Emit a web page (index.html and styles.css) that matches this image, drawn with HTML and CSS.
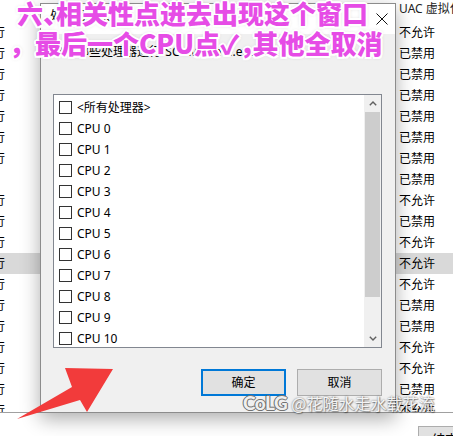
FILE: index.html
```html
<!DOCTYPE html>
<html lang="zh-CN">
<head>
<meta charset="utf-8">
<title>处理器关联</title>
<link rel="stylesheet" href="styles.css">
</head>
<body>
<div class="tm">
  <div class="list">
    <div class="hdr"><div class="r">UAC 虚拟化</div></div>
    <div class="row"><div class="l"><span>正在运行</span></div><div class="r">不允许</div></div>
    <div class="row"><div class="l"><span>正在运行</span></div><div class="r">已禁用</div></div>
    <div class="row"><div class="l"><span>正在运行</span></div><div class="r">已禁用</div></div>
    <div class="row"><div class="l"><span>正在运行</span></div><div class="r">已禁用</div></div>
    <div class="row"><div class="l"><span>正在运行</span></div><div class="r">已禁用</div></div>
    <div class="row"><div class="l"><span>正在运行</span></div><div class="r">已禁用</div></div>
    <div class="row"><div class="l"><span>正在运行</span></div><div class="r">已禁用</div></div>
    <div class="row"><div class="l"></div><div class="r">已禁用</div></div>
    <div class="row"><div class="l"><span>正在运行</span></div><div class="r">不允许</div></div>
    <div class="row"><div class="l"><span>正在运行</span></div><div class="r">已禁用</div></div>
    <div class="row"><div class="l"><span>正在运行</span></div><div class="r">不允许</div></div>
    <div class="row sel"><div class="l"><span>正在运行</span></div><div class="r">不允许</div></div>
    <div class="row"><div class="l"><span>正在运行</span></div><div class="r">不允许</div></div>
    <div class="row"><div class="l"><span>正在运行</span></div><div class="r">已禁用</div></div>
    <div class="row"><div class="l"><span>正在运行</span></div><div class="r">已禁用</div></div>
    <div class="row"><div class="l"><span>正在运行</span></div><div class="r">不允许</div></div>
    <div class="row"><div class="l"><span>正在运行</span></div><div class="r">不允许</div></div>
    <div class="row"><div class="l"><span>正在运行</span></div><div class="r">已禁用</div></div>
    <div class="row"><div class="l"><span>正在运行</span></div><div class="r">不允许</div></div>
  </div>
  <div class="footer"><div class="end">结束任务</div></div>
</div>

<div class="dlg">
  <div class="tbar">
    <div class="ttl">处理器关联</div>
    <svg class="x" width="12" height="12" viewBox="0 0 12 12"><path d="M0.5 0.5 L11.5 11.5 M11.5 0.5 L0.5 11.5" stroke="#111" stroke-width="1" fill="none"/></svg>
  </div>
  <div class="body">
    <div class="prompt">允许哪些处理器运行“SCUMGame.exe”?</div>
    <div class="lb">
      <div class="items">
        <div class="item"><span class="cb"></span><span>&lt;所有处理器&gt;</span></div>
        <div class="item"><span class="cb"></span><span>CPU 0</span></div>
        <div class="item"><span class="cb"></span><span>CPU 1</span></div>
        <div class="item"><span class="cb"></span><span>CPU 2</span></div>
        <div class="item"><span class="cb"></span><span>CPU 3</span></div>
        <div class="item"><span class="cb"></span><span>CPU 4</span></div>
        <div class="item"><span class="cb"></span><span>CPU 5</span></div>
        <div class="item"><span class="cb"></span><span>CPU 6</span></div>
        <div class="item"><span class="cb"></span><span>CPU 7</span></div>
        <div class="item"><span class="cb"></span><span>CPU 8</span></div>
        <div class="item"><span class="cb"></span><span>CPU 9</span></div>
        <div class="item"><span class="cb"></span><span>CPU 10</span></div>
      </div>
      <div class="sb">
        <div class="arr"><svg width="8" height="5" viewBox="0 0 8 5"><path d="M0.8 4.2 L4 1 L7.2 4.2" stroke="#606060" stroke-width="1.4" fill="none"/></svg></div>
        <div class="thumb"></div>
        <div class="track"></div>
        <div class="arr"><svg width="8" height="5" viewBox="0 0 8 5"><path d="M0.8 0.8 L4 4 L7.2 0.8" stroke="#606060" stroke-width="1.4" fill="none"/></svg></div>
      </div>
    </div>
    <div class="btns">
      <div class="btn ok">确定</div>
      <div class="btn">取消</div>
    </div>
  </div>
</div>

<div class="note">
  <div class="l1">六<span class="h">、</span>相关性点进去出现这个窗口</div>
  <div class="l2"><span class="tc">，</span>最后一个CPU点✓<span class="h">，</span>其他全取消</div>
</div>

<svg class="arrow" width="453" height="436" viewBox="0 0 453 436">
  <polygon points="17,419 72,387 65,368 113,369 87,412 80,400" fill="#f23b3b"/>
</svg>

<div class="wm"><span class="logo">CoLG</span><span>@花随水走水载花流</span></div>
</body>
</html>
```

FILE: styles.css
```css
* { box-sizing: border-box; }
html, body { margin: 0; padding: 0; }
body {
  width: 453px;
  height: 436px;
  overflow: hidden;
  position: relative;
  background: #fff;
  font-family: "Noto Sans", "Noto Sans CJK SC", sans-serif;
  font-size: 12px;
  color: #000;
}

/* background task manager */
.tm { display: flex; flex-direction: column; height: 436px; }
.list {
  height: 413px;
  flex: none;
  border-bottom: 1px solid #a0a0a0;
  overflow: hidden;
}
.hdr { height: 22px; display: flex; }
.hdr .r { margin-left: 397px; padding-left: 2px; padding-top: 1px; line-height: 16px; white-space: nowrap; color: #222; }
.row { height: 21px; display: flex; line-height: 21px; white-space: nowrap; }
.row.sel { background: #d9d9d9; }
.row .l { width: 397px; flex: none; }
.row .l span { display: inline-block; margin-left: -43px; }
.row .r { padding-left: 2px; }
.footer { flex: 1; display: flex; padding: 13px 0 0 418px; }
.end {
  width: 80px;
  height: 26px;
  flex: none;
  border: 1px solid #adadad;
  background: #e1e1e1;
  text-align: center;
  line-height: 24px;
  font-size: 13px;
}

/* dialog */
.dlg {
  position: absolute;
  left: 40px;
  top: 3px;
  width: 356px;
  height: 410px;
  border: 1px solid #8c8c8c;
  background: #f0f0f0;
  box-shadow: 0 6px 18px rgba(0, 0, 0, 0.32);
  display: flex;
  flex-direction: column;
}
.tbar {
  height: 30px;
  flex: none;
  background: #fff;
  display: flex;
  justify-content: space-between;
  padding: 0 7px 0 9px;
}
.ttl { line-height: 14px; padding-top: 5px; }
.x { margin-top: 9px; }
.body {
  flex: 1;
  display: flex;
  flex-direction: column;
  padding: 11px 13px 16px 12px;
}
.prompt { line-height: 14px; height: 14px; white-space: nowrap; }
.lb {
  margin-top: 35px;
  height: 254px;
  flex: none;
  border: 1px solid #828790;
  background: #fff;
  display: flex;
  overflow: hidden;
}
.items { flex: 1; padding: 2px 0 0 5px; }
.item { height: 21px; display: flex; align-items: center; gap: 5px; line-height: 21px; white-space: nowrap; }
.cb { width: 13px; height: 13px; flex: none; border: 1px solid #333; background: #fff; }
.sb { width: 17px; flex: none; background: #f0f0f0; display: flex; flex-direction: column; }
.arr { height: 17px; flex: none; display: flex; align-items: center; justify-content: center; }
.thumb { height: 185px; flex: none; margin: 0 1px; background: #cdcdcd; }
.track { flex: 1; }
.btns { margin-top: 21px; display: flex; justify-content: flex-end; gap: 11px; }
.btn {
  width: 85px;
  height: 27px;
  border: 1px solid #adadad;
  background: #e1e1e1;
  text-align: center;
  line-height: 25px;
}
.btn.ok { border: 2px solid #0078d7; line-height: 23px; }

/* annotation overlay */
.note {
  position: absolute;
  left: 0;
  top: -2px;
  font-family: "Noto Sans CJK SC", sans-serif;
  font-weight: 900;
  font-size: 26px;
  line-height: 30px;
  color: #e64ce6;
  white-space: nowrap;
  text-shadow:
    2px 0 0 #fff, -2px 0 0 #fff, 0 2px 0 #fff, 0 -2px 0 #fff,
    1.5px 1.5px 0 #fff, -1.5px -1.5px 0 #fff, 1.5px -1.5px 0 #fff, -1.5px 1.5px 0 #fff,
    0 0 4px rgba(0, 0, 0, 0.25);
}
.l1 { padding-left: 17px; }
.l2 { padding-left: 9px; }
.h { font-feature-settings: "halt"; }
.tc { font-family: "Noto Sans CJK TC", sans-serif; }

.arrow { position: absolute; left: 0; top: 0; pointer-events: none; }

.wm {
  position: absolute;
  left: 243px;
  top: 394px;
  display: flex;
  align-items: center;
  gap: 4px;
  font-family: "Noto Sans CJK SC", sans-serif;
  font-size: 16px;
  line-height: 18px;
  color: rgba(255, 255, 255, 0.93);
  white-space: nowrap;
  text-shadow: 0 0 2px rgba(0, 0, 0, 0.6), 1px 1px 1px rgba(0, 0, 0, 0.35);
}
.logo {
  font-family: Lato, sans-serif;
  font-weight: 900;
  font-size: 19px;
  letter-spacing: -0.5px;
  text-shadow: 0 0 1px #555, 1px 0 0 #777, -1px 0 0 #777, 0 1px 0 #777, 0 -1px 0 #777;
}
```
